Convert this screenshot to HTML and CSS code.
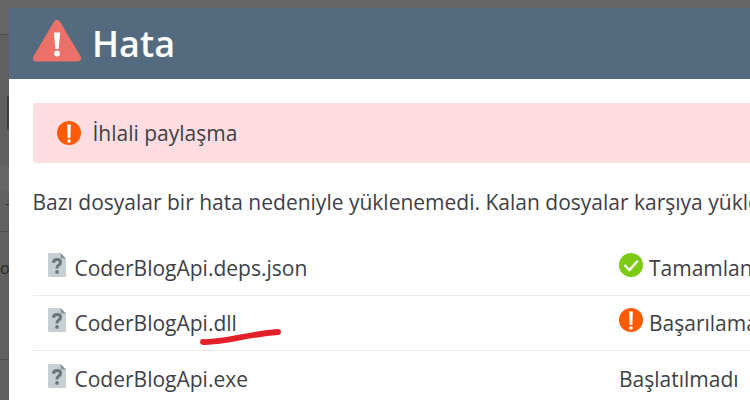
FILE: index.html
```html
<!DOCTYPE html>
<html lang="tr">
<head>
<meta charset="utf-8">
<title>Hata</title>
<link rel="stylesheet" href="styles.css">
</head>
<body>
<svg width="0" height="0" class="defs" aria-hidden="true">
  <symbol id="file" viewBox="0 0 18 24">
    <path d="M1 0H12.500L18 5.500V23Q18 24 17 24H1Q0 24 0 23V1Q0 0 1 0Z" fill="#c6d0d2"/>
    <path d="M12.500 0L18 5.500H13.500Q12.500 5.500 12.500 4.500Z" fill="#8b9699"/>
    <path d="M5.300 9.700Q5.800 6.500 9 6.500Q12.500 6.500 12.500 9.200Q12.500 10.900 10.700 12Q9 13 9 15.500" fill="none" stroke="#6b7579" stroke-width="3"/>
    <circle cx="9" cy="18.900" r="1.900" fill="#6b7579"/>
  </symbol>
  <symbol id="alert" viewBox="0 0 24 24">
    <circle cx="12" cy="12" r="12" fill="#ff5a05"/>
    <path d="M10.200 3.500H13.800L13.400 17H10.600Z" fill="#fff"/>
    <circle cx="12" cy="20" r="1.800" fill="#fff"/>
  </symbol>
</svg>
<div class="backdrop">
  <i class="edge-line top"></i><i class="edge-mark"></i><i class="edge-band"></i><i class="edge-dash"></i>
  <i class="edge-line middle"></i><span class="edge-text">o</span><i class="edge-line bottom"></i>
</div>
<main class="dialog">
  <header class="header">
    <svg class="warning" viewBox="0 0 48 42">
      <path d="M24 3.500L44.500 38H3.500Z" fill="#ec7168" stroke="#ec7168" stroke-width="7" stroke-linejoin="round"/>
      <path d="M20.800 12.500H27.200L25.600 29H22.400Z" fill="#fff"/>
      <circle cx="24" cy="33.500" r="2.900" fill="#fff"/>
    </svg>
    <h1>Hata</h1>
  </header>
  <section class="content">
    <div class="notice"><svg class="status-icon"><use href="#alert"/></svg><span>İhlali paylaşma</span></div>
    <p class="message">Bazı dosyalar bir hata nedeniyle yüklenemedi. Kalan dosyalar karşıya yüklenmedi.</p>
    <div class="files">
      <div class="row">
        <svg class="file-icon"><use href="#file"/></svg><span class="name">CoderBlogApi.deps.json</span>
        <span class="status"><svg class="status-icon" viewBox="0 0 24 24"><circle cx="12" cy="12" r="12" fill="#7ccb12"/><path d="M5.500 12L10.500 17L18.800 7.800" fill="none" stroke="#fff" stroke-width="2.300"/></svg><span>Tamamlandı</span></span>
      </div>
      <div class="row">
        <svg class="file-icon"><use href="#file"/></svg><span class="name">CoderBlogApi.dll
          <svg class="underline" viewBox="0 0 82 18"><path d="M3 14C24 15 47 6 78 4" fill="none" stroke="#e32028" stroke-width="5.800" stroke-linecap="round"/></svg></span>
        <span class="status"><svg class="status-icon"><use href="#alert"/></svg><span>Başarılamadı</span></span>
      </div>
      <div class="row">
        <svg class="file-icon"><use href="#file"/></svg><span class="name">CoderBlogApi.exe</span>
        <span class="status"><span>Başlatılmadı</span></span>
      </div>
    </div>
  </section>
</main>
</body>
</html>
```

FILE: styles.css
```css
* { box-sizing: border-box; }
body {
  margin: 0;
  height: 400px;
  overflow: hidden;
  background: #666;
  color: #3e4045;
  font: 21px/30px "Open Sans", sans-serif;
}
svg { display: block; flex-shrink: 0; }
.defs { position: absolute; }
.backdrop {
  position: absolute;
  inset: 0 auto 0 0;
  width: 9px;
  overflow: hidden;
  background: linear-gradient(#666 0 35px, #606060 35px);
}
.backdrop > * { position: absolute; }
.edge-line { left: 0; width: 9px; height: 1px; background: #505050; }
.top { top: 34px; }
.middle { top: 231px; }
.bottom { top: 359px; }
.edge-mark { top: 96px; left: 7px; width: 2px; height: 34px; background: #423b36; }
.edge-band { top: 166px; width: 9px; height: 24px; background: #666; }
.edge-dash { top: 204px; left: 6px; width: 3px; height: 1px; background: #222; }
.edge-text { top: 253px; left: 0; color: #292929; font-size: 16px; }
.dialog { margin: 8px 0 0 9px; height: 392px; background: #fff; }
.header {
  display: flex;
  align-items: center;
  gap: 11px;
  height: 71px;
  padding-left: 24px;
  background: #546b7f;
}
.warning { width: 48px; height: 42px; margin-bottom: 5px; }
h1 { margin: 0; color: #fff; font-size: 36px; line-height: 48px; font-weight: 600; }
.content { padding: 24px 0 0 24px; }
.notice {
  display: flex;
  align-items: center;
  gap: 11.5px;
  height: 60px;
  padding-left: 24px;
  border-radius: 3px 0 0 3px;
  background: #fddde0;
}
.status-icon { width: 24px; height: 24px; }
.message { margin: 24px 0 0 -0.5px; white-space: nowrap; }
.files { margin-top: 23px; }
.row {
  display: grid;
  grid-template-columns: 18px 1fr 131px;
  column-gap: 8.5px;
  height: 55.5px;
  padding: 12.8px 0 0 15px;
  border-bottom: 1px solid #e9e9ea;
  white-space: nowrap;
}
.row:last-child { border-bottom: 0; }
.file-icon { width: 18px; height: 24px; }
.name { position: relative; }
.underline { position: absolute; top: 20px; left: 125px; width: 82px; height: 18px; }
.status { display: flex; gap: 6px; }
```
